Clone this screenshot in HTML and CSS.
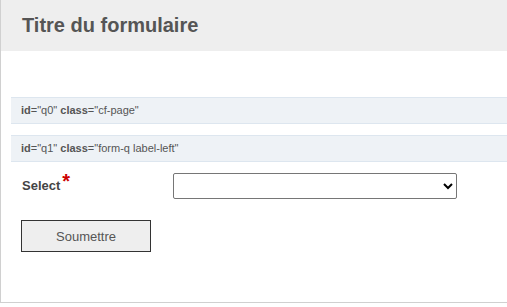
FILE: index.html
```html
<!DOCTYPE html>
<html lang="fr">
<head>
    <meta charset="UTF-8">
    <meta name="viewport" content="width=device-width, initial-scale=1.0">
    <title>Titre du formulaire</title>
    <link rel="stylesheet" href="styles.css">
</head>
<body>
    <div class="cf-form">
        <div class="cf-header">
            <h1>Titre du formulaire</h1>
        </div>

        <div class="cf-body">
            <div class="cf-debug"><b>id</b>="q0" <b>class</b>="cf-page"</div>
            <div class="cf-debug"><b>id</b>="q1" <b>class</b>="form-q label-left"</div>

            <div class="form-q label-left">
                <label class="form-label" for="q1-select">Select<span class="required">*</span></label>
                <select class="form-select" id="q1-select">
                    <option value=""></option>
                </select>
            </div>

            <button class="cf-submit" type="button">Soumettre</button>
        </div>
    </div>
</body>
</html>
```

FILE: styles.css
```css
* {
    margin: 0;
    padding: 0;
    box-sizing: border-box;
}

body {
    font-family: 'Liberation Sans', Arial, sans-serif;
    background: #fff;
}

.cf-form {
    width: 100%;
    border-left: 1px solid #d0d0d0;
    border-bottom: 1px solid #d0d0d0;
}

.cf-header {
    height: 51px;
    background: #eeeeee;
    padding-left: 21px;
}

.cf-header h1 {
    font-size: 20px;
    line-height: 51px;
    font-weight: bold;
    color: #555;
}

.cf-body {
    padding: 46px 0 50px 10px;
}

.cf-debug {
    height: 27px;
    line-height: 25px;
    margin-bottom: 11px;
    padding-left: 10px;
    background: #eef2f6;
    border-top: 1px solid #dde6ef;
    border-bottom: 1px solid #dde6ef;
    font-size: 11px;
    color: #555;
}

.cf-debug b {
    font-weight: bold;
}

.form-q {
    display: flex;
    align-items: center;
    height: 26px;
    padding-left: 11px;
}

.form-label {
    width: 151px;
    font-size: 13px;
    line-height: 16px;
    font-weight: bold;
    color: #444;
}

.required {
    color: #cc0000;
    font-size: 20px;
    line-height: 10px;
    position: relative;
    top: -2px;
    margin-left: 2px;
}

.form-select {
    width: 284px;
    height: 26px;
    border: 1px solid #767676;
    border-radius: 2px;
    background: #fff;
    font-size: 13px;
}

.cf-submit {
    display: block;
    margin-top: 21px;
    margin-left: 10px;
    width: 130px;
    height: 32px;
    background: #eeeeee;
    border: 1px solid #333;
    font-family: 'Liberation Sans', Arial, sans-serif;
    font-size: 13px;
    color: #555;
    cursor: pointer;
}
```
